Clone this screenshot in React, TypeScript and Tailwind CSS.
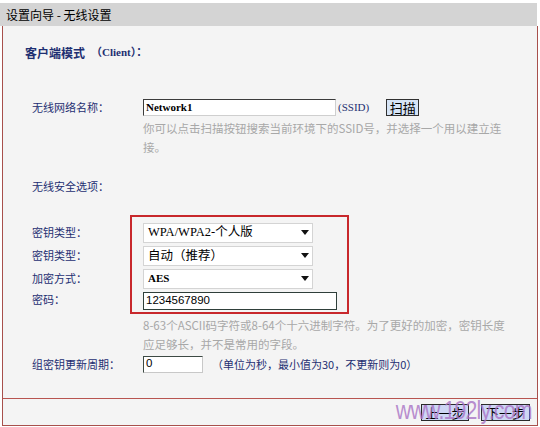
import type { ReactNode } from 'react';

const CJK = { fontFamily: '"Noto Sans CJK SC", "Liberation Sans", sans-serif' };
const SERIF = { fontFamily: '"Liberation Serif", "Noto Sans CJK SC", serif' };
const SANS = { fontFamily: '"Liberation Sans", "Noto Sans CJK SC", sans-serif' };

/** Flat XP-style dropdown with a black caret on the right. */
function Select({ children }: { children: ReactNode }) {
  return (
    <div className="flex h-[20px] w-[170px] items-center justify-between border border-[#d4d4d4] bg-white pl-[4px] pr-[3px] text-[12.5px] text-black">
      <span className="leading-none" style={SERIF}>{children}</span>
      <svg width="8" height="5" viewBox="0 0 8 5">
        <path d="M0 0h8L4 5z" fill="#111" />
      </svg>
    </div>
  );
}

function Label({ children, className = '' }: { children: ReactNode; className?: string }) {
  return (
    <div className={`flex items-center text-[11px] text-[#1e2f72] ${className}`}>{children}</div>
  );
}

export default function App() {
  return (
    <div className="h-[427px] w-[540px] overflow-hidden bg-white" style={CJK}>
      {/* Title bar */}
      <div className="pt-[3px]">
        <div className="flex h-[23px] w-[537px] items-center bg-[#d4d4d4] pl-[6px] text-[12px] text-black">
          设置向导 - 无线设置
        </div>
      </div>

      <div className="relative ml-[2px] flex h-[400px] w-[536px] flex-col border-x border-b border-[#a8504c] bg-[#f4f4f4]">
        <div className="flex-1 pl-[29px]">
          {/* Mode heading */}
          <div className="ml-[-7px] flex pt-[17px] text-[12px] leading-[19px] font-semibold text-[#1e2f72]">
            <span>客户端模式</span>
            <span className="ml-[6px] text-[11px]" style={SERIF}>（Client）：</span>
          </div>

          {/* SSID */}
          <div className="mt-[35px] flex h-[20px] items-center">
            <Label className="w-[111px]">无线网络名称：</Label>
            <div className="flex h-[17px] w-[193px] items-center border border-[#3b3b3b] border-b-[#cfcfcf] border-r-[#cfcfcf] bg-white pl-[2px] text-[11px] font-bold text-black" style={SERIF}>
              Network1
            </div>
            <span className="ml-[2px] text-[11px] text-[#1e2f72]" style={SERIF}>(SSID)</span>
            <button className="ml-[17px] flex h-[17px] w-[33px] items-center justify-center border border-[#303030] bg-[#d6e4f6] text-[13px] leading-none text-black">
              扫描
            </button>
          </div>
          <div className="mt-[2px] ml-[111px] w-[380px] text-[11.5px] leading-[19px] text-[#a8a8a8]">
            你可以点击扫描按钮搜索当前环境下的SSID号，并选择一个用以建立连接。
          </div>

          {/* Security */}
          <div className="mt-[20px] text-[11px] leading-[19px] text-[#1e2f72]">无线安全选项：</div>

          <div className="mt-[19px] flex">
            <div className="flex w-[111px] flex-col pt-[6px]">
              <Label className="h-[23px]">密钥类型：</Label>
              <Label className="h-[23px]">密钥类型：</Label>
              <Label className="h-[23px]">加密方式：</Label>
              <Label className="h-[18px]">密码：</Label>
            </div>
            <div className="ml-[-13px] w-[219px] border-2 border-[#c8282c] pt-[4px] pl-[11px]">
              <div className="flex h-[23px] items-center">
                <Select>WPA/WPA2-个人版</Select>
              </div>
              <div className="flex h-[23px] items-center">
                <Select>
                  <span style={CJK}>自动（推荐）</span>
                </Select>
              </div>
              <div className="flex h-[23px] items-center">
                <Select>
                  <span className="text-[11px] font-bold">AES</span>
                </Select>
              </div>
              <div className="flex h-[22px] items-center">
                <div className="flex h-[18px] w-[194px] items-center border border-[#2f3f3a] bg-white pl-[2px] text-[11.5px] text-black" style={SANS}>
                  1234567890
                </div>
              </div>
            </div>
          </div>

          <div className="mt-[2px] ml-[111px] w-[370px] text-[11.5px] leading-[19px] text-[#a8a8a8]">
            8-63个ASCII码字符或8-64个十六进制字符。为了更好的加密，密钥长度应足够长，并不是常用的字段。
          </div>

          {/* Group key renewal */}
          <div className="flex h-[20px] items-center">
            <Label className="w-[111px]">组密钥更新周期：</Label>
            <div className="flex h-[17px] w-[60px] items-center border border-[#3d4a44] border-b-[#c8c8c8] border-r-[#c8c8c8] bg-white pl-[2px] text-[11.5px] text-black" style={SANS}>
              0
            </div>
            <span className="ml-[9px] text-[11px] text-[#1e2f72]">（单位为秒，最小值为30，不更新则为0）</span>
          </div>
        </div>

        {/* Footer */}
        <div className="flex h-[27px] items-center justify-end gap-[12px] border-t border-[#b85450] pr-[7px]">
          <button className="flex h-[17px] w-[48px] items-center justify-center border border-[#2a2a2a] bg-[#cdd6f4] text-[13px] leading-none text-black">
            上一步
          </button>
          <button className="flex h-[17px] w-[49px] items-center justify-center border border-[#2a2a2a] bg-[#cdd6f4] text-[13px] leading-none text-black">
            下一步
          </button>
        </div>

        {/* Site watermark over the footer */}
        <div
          className="pointer-events-none absolute bottom-[2px] right-[5px] z-10 origin-right scale-x-[0.82] text-[26px] leading-none tracking-[-1px] text-[#a872c4]/80"
          style={SANS}
        >
          www.192ly.com
        </div>
      </div>
    </div>
  );
}
